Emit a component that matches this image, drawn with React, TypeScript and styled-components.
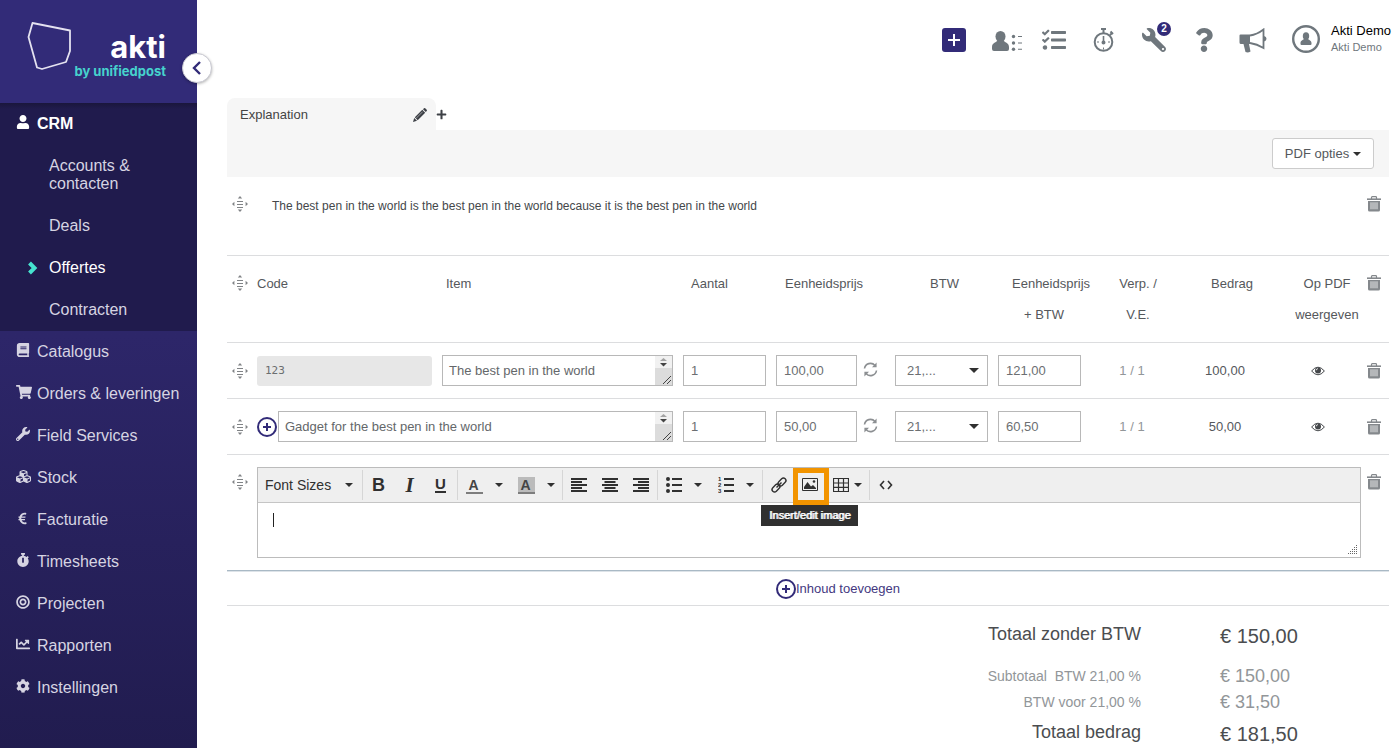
import React from "react";
import styled, { createGlobalStyle } from "styled-components";
import {
  FaUser, FaBook, FaShoppingCart, FaWrench, FaCubes, FaEuroSign, FaStopwatch,
  FaBullseye, FaChartLine, FaCog, FaTasks, FaQuestion, FaPlus,
} from "react-icons/fa";

const GlobalStyle = createGlobalStyle`
  * { box-sizing: border-box; }
  body { margin: 0; background: #fff; color: #55585c; font: 13px/18px "Liberation Sans", Arial, sans-serif; }
  button, input, select, textarea { font: inherit; color: inherit; margin: 0; }
  button { background: none; border: 0; padding: 0; cursor: pointer; }
  a { color: inherit; text-decoration: none; }
  svg { display: block; flex: none; }
`;

const line = "#dcdddf";
const field = "#b8b8b8";
const indigo = "#322b78";

const Page = styled.div`
  display: grid;
  grid-template-columns: 197px minmax(0, 1fr);
  min-height: 100vh;
`;

/* Sidebar */
const Sidebar = styled.aside`
  position: relative;
  background: linear-gradient(#322b78 0, #2d2669 45%, #211c4f 100%);
  color: #d6d4e2;
  font-size: 16px;
`;
const Brand = styled.a`
  display: flex;
  height: 103px;
  padding: 21px 31px 0 27px;
  background: ${indigo};
`;
const BrandText = styled.span`
  flex: 1;
  display: flex;
  flex-direction: column;
  align-items: flex-end;
  padding-top: 9px;
  font-family: Inter, sans-serif;
  font-weight: 700;
  white-space: nowrap;
`;
const BrandName = styled.span`
  color: #fff;
  font-size: 31px;
  line-height: 34px;
`;
const BrandBy = styled.span`
  color: #46d3cd;
  font-size: 13px;
  line-height: 15px;
`;
const Collapse = styled.button`
  position: absolute;
  top: 53px;
  right: -15px;
  width: 30px;
  height: 30px;
  border-radius: 50%;
  border: 1px solid #c9c9d2;
  background: #fff;
  color: ${indigo};
  display: grid;
  place-items: center;
  box-shadow: 0 1px 3px rgba(0, 0, 0, 0.3);
`;
const NavGroup = styled.div`
  height: 228px;
  background: linear-gradient(#1a163c 0, #201b4d 6px);
`;
const NavItem = styled.a<{ $on?: boolean }>`
  display: flex;
  align-items: center;
  height: 42px;
  padding-left: 16px;
  color: ${(p) => (p.$on ? "#fff" : "inherit")};
  font-weight: ${(p) => (p.$on ? 700 : 400)};
  white-space: nowrap;
`;
const NavIcon = styled.span`
  width: 21px;
  padding-bottom: 4px;
`;
const SubItem = styled.a<{ $on?: boolean }>`
  display: flex;
  align-items: center;
  padding: 12px 40px 12px 27px;
  color: ${(p) => (p.$on ? "#fff" : "inherit")};
`;
const SubMark = styled.span`
  width: 22px;
  flex: none;
  color: #46e3cf;
`;

/* Main column */
const Main = styled.main`
  padding: 0 10px 0 30px;
  min-width: 0;
`;
const TopBar = styled.header`
  display: flex;
  justify-content: flex-end;
  align-items: center;
  height: 80px;
  margin: 0 -2px 18px 0;
  color: #6f777d;
`;
const TopButton = styled.button`
  position: relative;
  width: 50px;
  height: 40px;
  display: grid;
  place-items: center;
`;
const AddBox = styled.span`
  display: grid;
  place-items: center;
  width: 24px;
  height: 24px;
  border-radius: 3px;
  background: ${indigo};
`;
const Badge = styled.span`
  position: absolute;
  top: 2px;
  right: 8px;
  width: 14px;
  height: 14px;
  border-radius: 50%;
  background: ${indigo};
  color: #fff;
  font-size: 10px;
  line-height: 14px;
  font-weight: 700;
`;
const Account = styled.div`
  margin: 0 0 3px 2px;
  font-size: 11px;
  line-height: 17px;
  white-space: nowrap;
`;
const AccountName = styled.div`
  color: #000;
  font-size: 13px;
`;

const Tabs = styled.div`
  display: flex;
  align-items: center;
  height: 32px;
`;
const Tab = styled.div`
  display: flex;
  align-items: center;
  justify-content: space-between;
  width: 209px;
  height: 32px;
  padding: 2px 9px 0 13px;
  border-radius: 8px 8px 0 0;
  background: #f6f6f6;
  color: #444;
`;
const IconButton = styled.button`
  display: grid;
  place-items: center;
  color: #3d4046;
`;
const OptionBar = styled.div`
  display: flex;
  justify-content: flex-end;
  padding: 8px 15px;
  background: #f6f6f6;
`;
const OptionButton = styled.button`
  display: flex;
  align-items: center;
  justify-content: center;
  gap: 4px;
  width: 102px;
  height: 31px;
  border: 1px solid #ccc;
  border-radius: 3px;
  background: #fff;
`;

/* Content blocks */
const Block = styled.section<{ $last?: boolean }>`
  display: flex;
  padding: 12px 0;
  border-bottom: ${(p) => (p.$last ? "1px solid #a9b9c5" : `1px solid ${line}`)};
  box-shadow: ${(p) => (p.$last ? "0 1px 0 #dde3e8" : "none")};
`;
const BlockBody = styled.div`
  flex: 1;
  min-width: 0;
`;
const Note = styled.p`
  min-height: 54px;
  margin: 0;
  padding: 8px 15px;
  font-size: 12px;
  color: #44474a;
`;
const Handle = styled.button`
  display: flex;
  align-items: center;
  width: 30px;
  height: 30px;
  padding-left: 5px;
  color: #808386;
  cursor: move;
`;
const Remove = styled.button`
  display: grid;
  place-items: center;
  width: 28px;
  height: 30px;
  padding-right: 2px;
  color: #84888c;
`;

const Lines = styled.table`
  width: 100%;
  table-layout: fixed;
  border-collapse: separate;
  border-spacing: 0;
`;
const Col = styled.col<{ $w?: number }>`
  width: ${(p) => (p.$w ? `${p.$w}px` : "auto")};
`;
const Th = styled.th<{ $pad?: string; $align?: string }>`
  padding: 12px 0;
  padding-inline: ${(p) => p.$pad || "0"};
  border-bottom: 1px solid ${line};
  font-weight: 400;
  line-height: 31px;
  vertical-align: top;
  text-align: ${(p) => p.$align || "center"};
`;
const Td = styled.td<{ $pad?: string; $align?: string }>`
  height: 56px;
  padding: 12px 0;
  padding-inline: ${(p) => p.$pad || "0"};
  border-bottom: 1px solid ${line};
  text-align: ${(p) => p.$align || "left"};
  color: ${(p) => (p.$align ? "#55585c" : "inherit")};
`;
const Muted = styled.span`
  color: #929699;
`;
const Cell = styled.div`
  display: flex;
  align-items: center;
  gap: 1px;
`;
const CodeInput = styled.input`
  display: block;
  width: 100%;
  height: 30px;
  border: 0;
  border-radius: 3px;
  padding: 0 8px;
  background: #e7e7e7;
  color: #6b6e70;
  font: 11px/16px "DejaVu Sans Mono", monospace;
`;
const NumberInput = styled.input`
  display: block;
  width: ${(p) => p.width || 83}px;
  height: 31px;
  border: 1px solid ${field};
  padding: 0 7px;
  background: #fff;
  color: #6c6f72;
`;
const AreaBox = styled.div`
  flex: 1;
  display: flex;
  height: 31px;
  border: 1px solid ${field};
  color: #64676a;
`;
const Area = styled.textarea`
  flex: 1;
  min-width: 0;
  border: 0;
  padding: 6px 6px 5px;
  resize: none;
  overflow: hidden;
  background: #fff;
`;
const Scroll = styled.span`
  width: 17px;
  background: linear-gradient(#f1f1f1 12px, #dcdcdc 12px);
`;
const SelectBox = styled.div`
  display: flex;
  align-items: center;
  width: 93px;
  height: 31px;
  border: 1px solid ${field};
  padding-right: 8px;
  color: #6c6f72;
`;
const Select = styled.select`
  flex: 1;
  min-width: 0;
  height: 29px;
  border: 0;
  padding: 0 0 0 11px;
  appearance: none;
  background: none;
`;
const RefreshButton = styled(IconButton)`
  padding: 0 0 3px 5px;
  color: #8c8f92;
`;

/* Rich text editor */
const Editor = styled.div`
  border: 1px solid #bcbcbc;
`;
const Toolbar = styled.div`
  display: flex;
  align-items: center;
  height: 35px;
  border-bottom: 1px solid #c5c5c5;
  background: #efefef;
  color: #303030;
`;
const Group = styled.div<{ $gap?: boolean }>`
  display: flex;
  height: 30px;
  padding-right: ${(p) => (p.$gap ? 1 : 0)}px;
  & + & { border-left: 1px solid #d6d6d6; }
`;
const Tool = styled.button<{ $w?: number }>`
  position: relative;
  display: flex;
  align-items: center;
  justify-content: center;
  gap: 5px;
  width: ${(p) => p.$w || 31}px;
  height: 30px;
`;
const Split = styled(Tool)`
  width: 52px;
  justify-content: flex-start;
  gap: 12px;
  padding-left: 8px;
`;
const SizeTool = styled(Tool)`
  width: 104px;
  justify-content: space-between;
  padding: 0 9px 0 7px;
  font-size: 14px;
`;
const Glyph = styled.span<{ $serif?: boolean; $under?: boolean }>`
  font-family: ${(p) => (p.$serif ? '"Liberation Serif", serif' : '"Liberation Sans", sans-serif')};
  font-size: ${(p) => (p.$serif ? 21 : p.$under ? 15 : 18)}px;
  font-style: ${(p) => (p.$serif ? "italic" : "normal")};
  font-weight: 700;
  line-height: 14px;
  border-bottom: ${(p) => (p.$under ? "2px solid #303030" : "0")};
`;
const ColorGlyph = styled.span<{ $bg?: boolean }>`
  width: 17px;
  height: 17px;
  border-bottom: 2px solid #7d7d7d;
  background: ${(p) => (p.$bg ? "#bbb" : "none")};
  font-size: 14px;
  line-height: 16px;
  font-weight: 700;
  color: #444;
  text-align: center;
  padding-right: 2px;
`;
const Spot = styled.span`
  position: absolute;
  z-index: 1;
  top: -2px;
  left: -1px;
  width: 36px;
  height: 37px;
  border: 5px solid #f29400;
`;
const Tip = styled.span`
  position: absolute;
  z-index: 2;
  top: 35px;
  left: -33px;
  padding: 0 8px;
  background: #303030;
  color: #fff;
  font-size: 11px;
  line-height: 21px;
  white-space: nowrap;
  text-shadow: 1px 0 0 #fff;
`;
const Paper = styled.div`
  display: flex;
  justify-content: space-between;
  align-items: flex-end;
  height: 54px;
`;
const Caret = styled.span`
  align-self: flex-start;
  width: 1px;
  height: 14px;
  margin: 10px 15px;
  background: #222;
`;

const AddRow = styled.div`
  display: flex;
  justify-content: center;
  padding: 7px 0 6px;
  border-bottom: 1px solid ${line};
`;
const AddButton = styled.button`
  display: flex;
  align-items: center;
  height: 21px;
  margin-left: 60px;
  color: #44397f;
`;

const Totals = styled.dl`
  display: grid;
  grid-template-columns: 1fr 169px;
  column-gap: 79px;
  margin: 0;
`;
const Label = styled.dt<{ $big?: boolean }>`
  padding-top: ${(p) => (p.$big ? 16 : 0)}px;
  text-align: right;
  font-size: ${(p) => (p.$big ? 18 : 14)}px;
  line-height: ${(p) => (p.$big ? 24 : 26)}px;
  color: ${(p) => (p.$big ? "#4b4d50" : "#929699")};
  white-space: pre;
  &:last-of-type { padding-top: 5px; }
`;
const Amount = styled.dd<{ $big?: boolean }>`
  margin: 0;
  padding: ${(p) => (p.$big ? "18px 0 15px" : "0")};
  font-size: ${(p) => (p.$big ? 20 : 18)}px;
  line-height: ${(p) => (p.$big ? 24 : 26)}px;
  color: ${(p) => (p.$big ? "#4b4d50" : "#929699")};
  &:last-of-type { padding: 7px 0 0; }
`;

/* Drawings */
const CaretDown = ({ w = 8 }: { w?: number }) => (
  <svg width={w} height={w / 2} viewBox="0 0 8 4"><path d="M0 0h8L4 4z" fill="#303030" /></svg>
);
const MoveIcon = () => (
  <svg width="16" height="16" viewBox="0 0 16 16" fill="currentColor">
    <path d="M5.800 2.400 8 0l2.200 2.400zM5.800 13.600 8 16l2.200-2.400zM2.400 5.800 0 8l2.400 2.200zM13.600 5.800 16 8l-2.400 2.200zM5 5h6v1H5zM5 8h6v1H5zM5 11h6v1H5z" />
  </svg>
);
const TrashIcon = () => (
  <svg width="14" height="16" viewBox="0 0 14 16" fill="none" stroke="currentColor">
    <path d="M0 3.200h14" strokeWidth="1.600" />
    <path d="M4.500 3V1.500Q4.500.700 5.300.700h3.400q.8 0 .8.800V3" strokeWidth="1.200" />
    <path d="M1 5h12v9q0 1.500-1.500 1.500h-9Q1 15.500 1 14z" fill="currentColor" stroke="none" />
    <path d="M4 6.300v7M6 6.300v7M8 6.300v7M10 6.300v7" stroke="#fff" strokeWidth=".8" />
  </svg>
);
const PencilIcon = () => (
  <svg width="14" height="14" viewBox="0 0 14 14" fill="#3d4046">
    <path d="m0 14 1.200-4 2.800 2.800zM1.800 9.300 9.300 1.800l2.900 2.900-7.500 7.500zM10 1.200 11 .3q.6-.5 1.200 0l1.500 1.500q.5.600 0 1.200L12.800 4z" />
    <path d="m3.200 10.200 6.500-6.500" stroke="#f6f6f6" strokeWidth=".5" />
  </svg>
);
const PlusCircle = () => (
  <svg width="20" height="20" viewBox="0 0 20 20" fill="none" stroke={indigo}>
    <circle cx="10" cy="10" r="9" strokeWidth="2" />
    <path d="M10 6v8M6 10h8" strokeWidth="2" />
  </svg>
);
const RefreshIcon = () => (
  <svg width="15" height="15" viewBox="0 0 15 15" fill="none" stroke="currentColor" strokeWidth="1.600">
    <path d="M1.500 6.500A6 6 0 0 1 12 3.500M13.500 8.500A6 6 0 0 1 3 11.500" />
    <path d="M13.600.5v4.700H9zM1.400 14.500V9.800H6z" fill="currentColor" stroke="none" />
  </svg>
);
const EyeIcon = () => (
  <svg width="14" height="10" viewBox="0 0 14 10">
    <path d="M.6 5Q7-2.600 13.400 5 7 12.600.6 5z" fill="#fff" stroke="#44474a" strokeWidth="1" />
    <circle cx="7" cy="4.500" r="3" fill="#44474a" />
    <path d="M5.300 4.300A1.700 1.700 0 0 1 7 2.600" fill="none" stroke="#fff" strokeWidth=".8" />
  </svg>
);
const GripIcon = () => (
  <svg width="17" height="29" viewBox="0 0 17 29">
    <path d="M5 5h7L8.500 2z" fill="#a3a3a3" />
    <path d="M5 7h7l-3.500 3.500z" fill="#444" />
    <path d="m8 28 8-8M12 28l4-4" stroke="#444" strokeWidth="1" />
  </svg>
);
const ContactsIcon = () => (
  <svg width="36" height="22" viewBox="-6 -2 36 22" fill="currentColor">
    <ellipse cx="8.500" cy="5.500" rx="5" ry="5.500" />
    <path d="M5 9.500h7c0 2 5 2 5 6.500v2q0 2-2 2H2q-2 0-2-2v-2c0-4.500 5-4.500 5-6.500z" />
    <circle cx="21.500" cy="5.500" r="1.700" /><circle cx="21.500" cy="12" r="1.700" /><circle cx="21.500" cy="18.300" r="1.700" />
    <path d="M26 5h4v1h-4zM26 11.500h4v1h-4zM26 17.800h4v1h-4z" />
  </svg>
);
const TimerIcon = () => (
  <svg width="22" height="24" viewBox="0 0 22 24" fill="none" stroke="currentColor" strokeWidth="2">
    <circle cx="10.500" cy="14" r="8.800" />
    <path d="M10.500 1v4M8 1h5M17 7l2-2M17.500 3.500 20 6" />
    <path d="M10.500 8v6" strokeWidth="1.600" />
    <circle cx="10.500" cy="14.500" r="1" />
    <path d="M10.500 19.500v2M4 14h2M15 14h2" strokeWidth="1" />
  </svg>
);
const HornIcon = () => (
  <svg width="30" height="25" viewBox="0 0 30 25">
    <path d="M1.500 6.500H11v9.500H10l1.500 7.500q-2.500 1.500-5 .5L4.500 16H2q-1.500 0-1.500-1.500v-7q0-1 1-1z" fill="currentColor" />
    <path d="M11 7.500q7-1 13.500-6v18.500Q18 16 11 15" fill="none" stroke="currentColor" strokeWidth="1.800" />
    <path d="M25 8q2.500.5 2.500 2.700T25 13.500z" fill="currentColor" />
  </svg>
);
const AvatarIcon = () => (
  <svg width="32" height="30" viewBox="-4 0 32 30" fill="currentColor">
    <circle cx="14" cy="14" r="12.800" fill="none" stroke="currentColor" strokeWidth="2.400" />
    <ellipse cx="14" cy="11" rx="3.200" ry="3.800" />
    <path d="M12 13.500h4c0 1.500 3.500 1.500 3.500 4.500v1q0 1-1 1h-9q-1 0-1-1v-1c0-3 3.500-3 3.500-4.500z" />
  </svg>
);
const BrandShape = () => (
  <svg width="45" height="50" viewBox="0 0 45 50" fill="none" stroke="#e4e2f0" strokeWidth="1.800">
    <path d="M5.500 2 43 9.500V30l-4 11-24 7-5-1.500L1.500 16z" strokeLinejoin="round" />
  </svg>
);
const ActiveArrow = () => (
  <svg width="11" height="14" viewBox="0 0 11 14" fill="none" stroke="currentColor" strokeWidth="4">
    <path d="m2.500 2 5 5-5 5" />
  </svg>
);
const AlignIcon = ({ kind }: { kind: "left" | "center" | "right" }) => (
  <svg width="16" height="16" viewBox="0 0 16 16" fill="currentColor">
    {[1, 4, 7, 10, 13].map((y, i) => {
      const w = i % 2 ? 11 : 16;
      const x = kind === "left" ? 0 : kind === "right" ? 16 - w : (16 - w) / 2;
      return <rect key={y} x={x} y={y} width={w} height="2" />;
    })}
  </svg>
);
const BulletIcon = () => (
  <svg width="16" height="16" viewBox="0 0 16 16" fill="currentColor">
    {[2, 8, 14].map((y) => (
      <g key={y}><circle cx="2" cy={y} r="2" /><rect x="6" y={y - 1} width="10" height="2" /></g>
    ))}
  </svg>
);
const NumberedIcon = () => (
  <svg width="16" height="16" viewBox="0 0 16 16" fill="currentColor">
    {[2, 8, 14].map((y, i) => (
      <g key={y}>
        <text x="0" y={y + 2} fontSize="6" fontWeight="700" fontFamily="Liberation Sans, sans-serif">{i + 1}</text>
        <rect x="6" y={y - 1} width="10" height="2" />
      </g>
    ))}
  </svg>
);
const LinkIcon = () => (
  <svg width="16" height="16" viewBox="0 0 16 16" fill="none" stroke="currentColor" strokeWidth="1.400">
    <rect x="-4.500" y="-2.500" width="9" height="5" rx="2.500" transform="translate(11 5) rotate(-45)" />
    <rect x="-4.500" y="-2.500" width="9" height="5" rx="2.500" transform="translate(5 11) rotate(-45)" />
    <path d="m5.500 10.500 5-5" />
  </svg>
);
const ImageIcon = () => (
  <svg width="16" height="14" viewBox="0 0 16 14">
    <path d="M.5.500h15v12H.5z" fill="none" stroke="currentColor" />
    <path d="M2 11V9l3.500-5L9 8.500 11 7l3 3v1z" fill="currentColor" />
    <circle cx="12" cy="3.500" r="1.300" fill="currentColor" />
  </svg>
);
const TableIcon = () => (
  <svg width="16" height="14" viewBox="0 0 16 14" fill="none" stroke="currentColor">
    <path d="M.5.500h15v13H.5zM0 5h16M0 9.300h16M5.500 0v14M10.500 0v14" strokeWidth="1.200" />
  </svg>
);
const CodeIcon = () => (
  <svg width="14" height="10" viewBox="0 0 14 10" fill="none" stroke="currentColor" strokeWidth="1.600">
    <path d="M5 1 1.500 5 5 9M9 1l3.500 4L9 9" />
  </svg>
);
const ResizeDots = () => (
  <svg width="12" height="12" viewBox="0 0 12 12" fill="#666">
    {[0, 1, 2, 3, 4].flatMap((r) =>
      Array.from({ length: r + 1 }, (_, c) => <rect key={`${r}-${c}`} x={8 - c * 2} y={r * 2} width="1" height="1" />)
    )}
  </svg>
);

const MoveHandle = () => <Handle aria-label="Verplaatsen"><MoveIcon /></Handle>;
const RemoveButton = () => <Remove aria-label="Verwijderen"><TrashIcon /></Remove>;

const sections = [
  { icon: <FaBook size={14} />, label: "Catalogus" },
  { icon: <FaShoppingCart size={16} />, label: "Orders & leveringen" },
  { icon: <FaWrench size={14} />, label: "Field Services" },
  { icon: <FaCubes size={15} />, label: "Stock" },
  { icon: <FaEuroSign size={13} />, label: "Facturatie" },
  { icon: <FaStopwatch size={14} />, label: "Timesheets" },
  { icon: <FaBullseye size={14} />, label: "Projecten" },
  { icon: <FaChartLine size={14} />, label: "Rapporten" },
  { icon: <FaCog size={14} />, label: "Instellingen" },
];

const subsections = ["Accounts & contacten", "Deals", "Offertes", "Contracten"];

const items = [
  { code: "123", name: "The best pen in the world", count: "1", price: "100,00", gross: "121,00", total: "100,00" },
  { code: "", name: "Gadget for the best pen in the world", count: "1", price: "50,00", gross: "60,50", total: "50,00" },
];

const columnWidths = [30, 185, 0, 93, 119, 103, 92, 96, 92, 81, 30];

const ItemName = ({ name }: { name: string }) => (
  <AreaBox>
    <Area aria-label="Item" defaultValue={name} rows={1} />
    <Scroll><GripIcon /></Scroll>
  </AreaBox>
);

export default function App() {
  return (
    <Page>
      <GlobalStyle />
      <Sidebar>
        <Brand href="#">
          <BrandShape />
          <BrandText>
            <BrandName>akti</BrandName>
            <BrandBy>by unifiedpost</BrandBy>
          </BrandText>
        </Brand>
        <Collapse aria-label="Menu inklappen">
          <svg width="10" height="14" viewBox="0 0 10 14" fill="none" stroke="currentColor" strokeWidth="2.400"><path d="M8 1 2 7l6 6" /></svg>
        </Collapse>
        <nav>
          <NavGroup>
            <NavItem href="#" $on><NavIcon><FaUser size={14} /></NavIcon>CRM</NavItem>
            {subsections.map((s) => (
              <SubItem key={s} href="#" $on={s === "Offertes"}>
                <SubMark>{s === "Offertes" && <ActiveArrow />}</SubMark>
                {s}
              </SubItem>
            ))}
          </NavGroup>
          {sections.map((s) => (
            <NavItem key={s.label} href="#"><NavIcon>{s.icon}</NavIcon>{s.label}</NavItem>
          ))}
        </nav>
      </Sidebar>

      <Main>
        <TopBar>
          <TopButton aria-label="Toevoegen">
            <AddBox><svg width="12" height="12" viewBox="0 0 12 12" stroke="#fff" strokeWidth="2"><path d="M6 0v12M0 6h12" /></svg></AddBox>
          </TopButton>
          <TopButton aria-label="Contacten"><ContactsIcon /></TopButton>
          <TopButton aria-label="Taken"><FaTasks size={24} /></TopButton>
          <TopButton aria-label="Timer"><TimerIcon /></TopButton>
          <TopButton aria-label="Service">
            <FaWrench size={24} style={{ transform: "scaleX(-1)" }} />
            <Badge>2</Badge>
          </TopButton>
          <TopButton aria-label="Help"><FaQuestion size={24} /></TopButton>
          <TopButton aria-label="Nieuws"><HornIcon /></TopButton>
          <TopButton aria-label="Profiel"><AvatarIcon /></TopButton>
          <Account><AccountName>Akti Demo</AccountName>Akti Demo</Account>
        </TopBar>

        <Tabs>
          <Tab>Explanation<IconButton aria-label="Bewerken"><PencilIcon /></IconButton></Tab>
          <IconButton aria-label="Tab toevoegen"><FaPlus size={11} /></IconButton>
        </Tabs>
        <OptionBar>
          <OptionButton>PDF opties <CaretDown /></OptionButton>
        </OptionBar>

        <Block>
          <MoveHandle />
          <BlockBody>
            <Note>The best pen in the world is the best pen in the world because it is the best pen in the world</Note>
          </BlockBody>
          <RemoveButton />
        </Block>

        <Lines>
          <colgroup>{columnWidths.map((w, i) => <Col key={i} $w={w} />)}</colgroup>
          <thead>
            <tr>
              <Th><MoveHandle /></Th>
              <Th $align="left">Code</Th>
              <Th $align="left" $pad="4px">Item</Th>
              <Th $align="left" $pad="8px">Aantal</Th>
              <Th $align="left" $pad="9px">Eenheidsprijs</Th>
              <Th $pad="0 4px">BTW</Th>
              <Th $pad="14px">Eenheidsprijs + BTW</Th>
              <Th $pad="26px">Verp. / V.E.</Th>
              <Th>Bedrag</Th>
              <Th $pad="17px 0">Op PDF weergeven</Th>
              <Th $pad="2px 0"><RemoveButton /></Th>
            </tr>
          </thead>
          <tbody>
            {items.map((it) => (
              <tr key={it.name}>
                <Td><MoveHandle /></Td>
                {it.code ? (
                  <>
                    <Td $pad="0 10px"><CodeInput aria-label="Code" defaultValue={it.code} readOnly /></Td>
                    <Td $pad="0 10px"><ItemName name={it.name} /></Td>
                  </>
                ) : (
                  <Td colSpan={2} $pad="0 10px">
                    <Cell>
                      <IconButton aria-label="Code toevoegen"><PlusCircle /></IconButton>
                      <ItemName name={it.name} />
                    </Cell>
                  </Td>
                )}
                <Td><NumberInput aria-label="Aantal" defaultValue={it.count} /></Td>
                <Td>
                  <Cell>
                    <NumberInput aria-label="Eenheidsprijs" width={81} defaultValue={it.price} />
                    <RefreshButton aria-label="Vernieuwen"><RefreshIcon /></RefreshButton>
                  </Cell>
                </Td>
                <Td>
                  <SelectBox>
                    <Select aria-label="BTW"><option>21,...</option></Select>
                    <CaretDown w={10} />
                  </SelectBox>
                </Td>
                <Td><NumberInput aria-label="Eenheidsprijs + BTW" defaultValue={it.gross} /></Td>
                <Td $align="center" $pad="0 12px"><Muted>1 / 1</Muted></Td>
                <Td $align="center" $pad="0 14px">{it.total}</Td>
                <Td $pad="33px 0"><IconButton aria-label="Op PDF weergeven"><EyeIcon /></IconButton></Td>
                <Td $pad="2px 0"><RemoveButton /></Td>
              </tr>
            ))}
          </tbody>
        </Lines>

        <Block $last>
          <MoveHandle />
          <BlockBody>
            <Editor>
              <Toolbar>
                <Group><SizeTool>Font Sizes<CaretDown /></SizeTool></Group>
                <Group $gap>
                  <Tool aria-label="Bold"><Glyph>B</Glyph></Tool>
                  <Tool aria-label="Italic"><Glyph $serif>I</Glyph></Tool>
                  <Tool aria-label="Underline"><Glyph $under>U</Glyph></Tool>
                </Group>
                <Group>
                  <Split aria-label="Text color"><ColorGlyph>A</ColorGlyph><CaretDown /></Split>
                  <Split aria-label="Background color"><ColorGlyph $bg>A</ColorGlyph><CaretDown /></Split>
                </Group>
                <Group $gap>
                  <Tool aria-label="Align left"><AlignIcon kind="left" /></Tool>
                  <Tool aria-label="Align center"><AlignIcon kind="center" /></Tool>
                  <Tool aria-label="Align right"><AlignIcon kind="right" /></Tool>
                </Group>
                <Group>
                  <Split aria-label="Bullet list"><BulletIcon /><CaretDown /></Split>
                  <Split aria-label="Numbered list"><NumberedIcon /><CaretDown /></Split>
                </Group>
                <Group>
                  <Tool aria-label="Insert/edit link"><LinkIcon /></Tool>
                  <Tool $w={32}>
                    <ImageIcon />
                    <Spot />
                    <Tip>Insert/edit image</Tip>
                  </Tool>
                  <Tool $w={43} aria-label="Table"><TableIcon /><CaretDown /></Tool>
                </Group>
                <Group><Tool aria-label="Source code"><CodeIcon /></Tool></Group>
              </Toolbar>
              <Paper><Caret /><ResizeDots /></Paper>
            </Editor>
          </BlockBody>
          <RemoveButton />
        </Block>

        <AddRow>
          <AddButton><PlusCircle />Inhoud toevoegen</AddButton>
        </AddRow>

        <Totals>
          <Label $big>Totaal zonder BTW</Label><Amount $big>€ 150,00</Amount>
          <Label>{"Subtotaal  BTW 21,00 %"}</Label><Amount>€ 150,00</Amount>
          <Label>BTW voor 21,00 %</Label><Amount>€ 31,50</Amount>
          <Label $big>Totaal bedrag</Label><Amount $big>€ 181,50</Amount>
        </Totals>
      </Main>
    </Page>
  );
}
